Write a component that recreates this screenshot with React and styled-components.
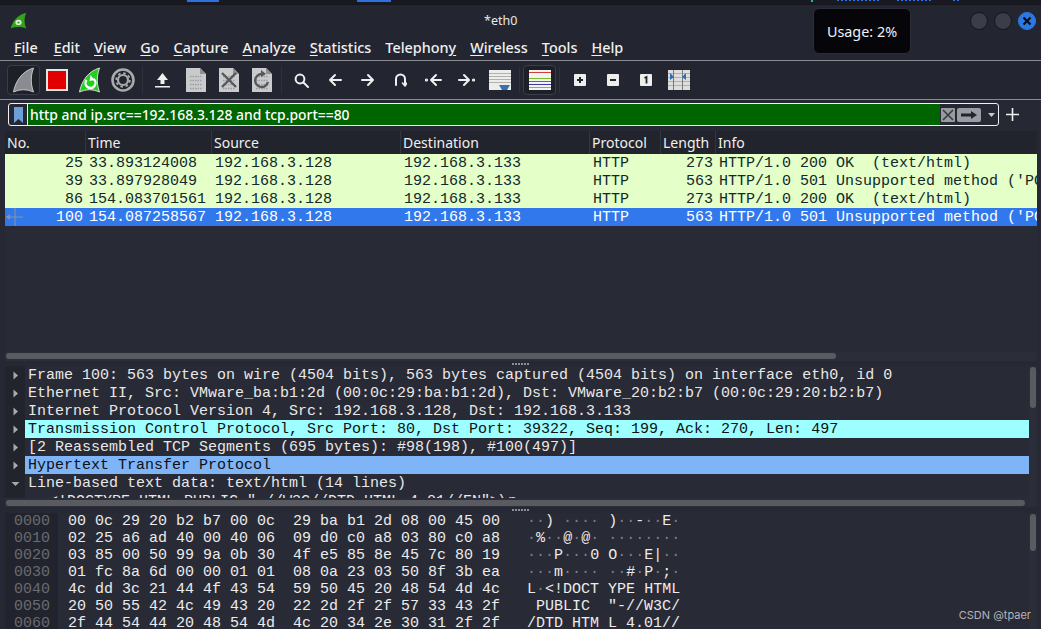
import React from 'react'
import styled, { createGlobalStyle } from 'styled-components'

const uiFont = `'Noto Sans', 'Open Sans', sans-serif`
const monoFont = `'Liberation Mono', monospace`
const packetCols = '80px 126px 189px 189px 71px 55px 1fr'

const GlobalStyle = createGlobalStyle`
  html, body {
    margin: 0;
    background: #fff;
    overflow: hidden;
  }
`

const Window = styled.div`
  position: relative;
  display: flex;
  flex-direction: column;
  width: 1041px;
  height: 629px;
  overflow: hidden;
  background: #262933;
  color: #e8e8e8;
  font-family: ${uiFont};
`

const TopStrip = styled.div`
  display: flex;
  height: 5px;
  background: #191a21;
  border-bottom: 1px solid #15161b;
  box-sizing: border-box;
`

const TopMark = styled.div`
  height: ${p => (p.$faint ? 1 : 2)}px;
  margin-left: ${p => p.$gap}px;
  width: ${p => p.$w}px;
  background: ${p =>
    p.$faint ? 'repeating-linear-gradient(90deg, #2f6fe0 0 2px, transparent 2px 4px)' : p.$color || '#2f6fe0'};
`

const TitleBar = styled.div`
  display: flex;
  align-items: flex-start;
  height: 33px;
  box-sizing: border-box;
  padding: 7px 5px 0 10px;
  background: #232630;
`

const TitleText = styled.div`
  flex: 1;
  padding: 0 0 0 457px;
  font-size: 12.5px;
  line-height: 17px;
`

const WinButtons = styled.div`
  display: flex;
  gap: 6px;
`

const WinButton = styled.div`
  display: flex;
  align-items: center;
  justify-content: center;
  width: 18px;
  height: 18px;
  box-sizing: border-box;
  border-radius: 50%;
  background: ${p => (p.$close ? '#2b78e4' : '#3b3e4a')};
  border: 1px solid ${p => (p.$close ? '#2b78e4' : '#14151a')};
`

const UsageTip = styled.div`
  position: absolute;
  left: 813px;
  top: 8px;
  width: 98px;
  height: 46px;
  box-sizing: border-box;
  display: flex;
  align-items: center;
  justify-content: center;
  background: #05050a;
  border: 1px solid #2b2d36;
  border-radius: 6px;
  font-size: 14.4px;
  color: #eef2f8;
`

const MenuBar = styled.div`
  display: flex;
  gap: 14px;
  height: 23px;
  box-sizing: border-box;
  padding-left: 14px;
  background: #232630;
  border-bottom: 1px solid #8a8b90;
  font-size: 14.4px;
  font-weight: 500;
  line-height: 20px;
  color: #f0f0f0;
`

const MenuItem = styled.span`
  &:first-child {
    margin-right: 2px;
  }

  u {
    text-underline-offset: 2px;
  }
`

const Toolbar = styled.div`
  display: flex;
  align-items: center;
  height: 39px;
  box-sizing: border-box;
  padding-left: 7px;
  background: #232630;
  border-bottom: 1px solid #8a8b90;
`

const ToolButton = styled.div`
  display: flex;
  align-items: center;
  justify-content: center;
  width: 33px;
  height: 30px;
  flex: none;
  box-sizing: border-box;
  border-radius: 4px;
  border: 1px solid ${p => (p.$active ? '#3a3d49' : 'transparent')};
  background: ${p => (p.$active ? '#1e2028' : 'transparent')};
`

const ToolSep = styled.div`
  width: 1px;
  height: 26px;
  margin: 0 3px 0 3px;
  background: #2f323c;
  flex: none;
`

const FilterRow = styled.div`
  display: flex;
  align-items: center;
  height: 31px;
  box-sizing: border-box;
  padding: 3px 0 5px 8px;
  background: #262933;
`

const FilterBox = styled.div`
  display: flex;
  align-items: stretch;
  width: 991px;
  height: 23px;
  box-sizing: border-box;
  border: 1px solid #f0f0f0;
  border-radius: 3px;
  background: #262933;
`

const BookmarkCell = styled.div`
  display: flex;
  align-items: center;
  justify-content: center;
  width: 18px;
  border-right: 1px solid #f0f0f0;
`

const FilterText = styled.div`
  flex: 1;
  padding-left: 2px;
  background: #006400;
  font-size: 13.9px;
  font-weight: 500;
  line-height: 22px;
  color: #fff;
`

const FilterActions = styled.div`
  display: flex;
  align-items: center;
  gap: 2px;
  padding: 0 2px 0 1px;
`

const AddFilter = styled.div`
  margin-left: 6px;
  width: 14px;
  height: 14px;
  display: flex;
  align-items: center;
  justify-content: center;
`

const Pane = styled.div`
  margin: 0 4px 0 5px;
  height: ${p => p.$h}px;
  flex: none;
  overflow: hidden;
  position: relative;
`

const HeaderRow = styled.div`
  display: grid;
  grid-template-columns: ${packetCols};
  height: 23px;
  background: #22242d;
  font-size: 14px;
  line-height: 24px;
  color: #f0f0f0;
`

const HeaderCell = styled.div`
  padding-left: 2px;
  border-left: ${p => (p.$first ? 'none' : '1px solid #33353f')};
  box-sizing: border-box;
`

const PacketRow = styled.div`
  position: relative;
  display: grid;
  grid-template-columns: ${packetCols};
  grid-auto-rows: 18px;
  height: 18px;
  background: ${p => (p.$selected ? '#3178ec' : '#e4ffc7')};
  color: ${p => (p.$selected ? '#fff' : '#12272e')};
  font-family: ${monoFont};
  font-size: 15px;
  line-height: 20px;
  white-space: pre;
`

const Cell = styled.div`
  overflow: hidden;
  padding-left: ${p => (p.$right ? 0 : 4)}px;
  padding-right: ${p => (p.$right ? 2 : 0)}px;
  text-align: ${p => (p.$right ? 'right' : 'left')};
`

const RowMark = styled.svg`
  position: absolute;
  left: 0;
  top: 0;
`

const PacketGap = styled.div`
  height: 126px;
  background: #282a35;
`

const HTrack = styled.div`
  height: 9px;
  padding: ${p => p.$top ?? 1}px 1px 0;
  box-sizing: border-box;
  background: #2b2d38;
`

const HThumb = styled.div`
  width: ${p => p.$w}px;
  height: 6px;
  background: #5a5b60;
  border-radius: 4px;
`

const Splitter = styled.div`
  height: ${p => p.$h}px;
  flex: none;
  display: flex;
  align-items: center;
  justify-content: center;
  background: #262933;
`

const GripDots = styled.div`
  width: 17px;
  height: 2px;
  background: repeating-linear-gradient(90deg, #8d8e94 0 2px, transparent 2px 3px);
`

const Panes = styled.div`
  display: flex;
  height: ${p => p.$h}px;
  overflow: hidden;
  background: #282a35;
`

const Lines = styled.div`
  flex: 1;
  min-width: 0;
  overflow: hidden;
`

const VTrack = styled.div`
  width: 8px;
  flex: none;
  padding: 1px 1px 0 1px;
  box-sizing: border-box;
  background: #2b2d38;
`

const VThumb = styled.div`
  height: ${p => p.$h}px;
  width: 6px;
  background: #5a5b60;
  border-radius: 4px;
`

const TreeRow = styled.div`
  display: flex;
  height: 18px;
  font-family: ${monoFont};
  font-size: 15px;
  line-height: 20px;
  white-space: pre;
`

const TreeGutter = styled.div`
  width: 20px;
  flex: none;
  display: flex;
  align-items: center;
  justify-content: center;
  background: #22242d;
`

const TreeLabel = styled.div`
  flex: 1;
  padding-left: ${p => p.$indent || 3}px;
  background: ${p => p.$bg || 'transparent'};
  color: ${p => (p.$bg ? '#0e1014' : '#e8e8e8')};
`

const HexRow = styled.div`
  display: flex;
  height: 17px;
  font-family: ${monoFont};
  font-size: 15px;
  line-height: 18px;
  white-space: pre;
`

const HexOffset = styled.div`
  width: 53px;
  flex: none;
  padding-left: 9px;
  box-sizing: border-box;
  background: #22242d;
  color: #6a6b70;
`

const HexBytes = styled.div`
  padding-left: 10px;
  color: #ececec;
`

const HexAscii = styled.div`
  padding-left: 27px;
  color: #ececec;
`

const Dim = styled.span`
  color: #7c7e84;
`

const Watermark = styled.div`
  position: absolute;
  right: 10px;
  bottom: 7px;
  font-family: Inter, ${uiFont};
  font-size: 11px;
  line-height: 14px;
  color: #b4b5b8;
`

/* icons */

const fin = 'M1 25C3 14 10 4 21 1C18 9 18 17 21 25C14 22 8 22 1 25Z'

const Logo = () => (
  <svg width="17" height="17" viewBox="0 0 22 26" preserveAspectRatio="none" style={{ flex: 'none' }}>
    <path d={fin} fill="#35a11d" />
    <circle cx="11" cy="16" r="4" fill="#dff3d5" />
    <circle cx="11" cy="16" r="1.6" fill="#35a11d" />
  </svg>
)

const FinGray = () => (
  <svg width="23" height="26" viewBox="0 0 22 26">
    <path d={fin} fill="#8a8c92" stroke="#c4c5c8" strokeWidth="1" />
  </svg>
)

const StopIcon = () => (
  <svg width="22" height="22" viewBox="0 0 22 22">
    <rect width="22" height="22" fill="#e6e6e2" />
    <rect x="2" y="2" width="18" height="18" fill="#e00000" />
  </svg>
)

const FinRestart = () => (
  <svg width="23" height="26" viewBox="0 0 22 26">
    <path d={fin} fill="#1fd01f" stroke="#d8dcd4" strokeWidth="1" />
    <path d="M8 13A5 5 0 1 0 15 12" fill="none" stroke="#fff" strokeWidth="2.4" />
    <path d="M12 8L16 13L11 14Z" fill="#fff" />
  </svg>
)

const GearIcon = () => (
  <svg width="24" height="24" viewBox="0 0 24 24" fill="none" stroke="#a9aaac">
    <circle cx="12" cy="12" r="10.5" strokeWidth="2.6" />
    <circle cx="12" cy="12" r="5" strokeWidth="2.2" />
    <circle cx="12" cy="12" r="6.8" strokeWidth="1.8" strokeDasharray="2.6 2.74" />
  </svg>
)

const UploadIcon = () => (
  <svg width="15" height="16" viewBox="0 0 15 16">
    <path d="M7.5 1L13 8H9.5V12H5.5V8H2Z" fill="#efefef" />
    <rect y="14" width="15" height="1.5" fill="#efefef" />
  </svg>
)

const FileBase = ({ children }) => (
  <svg width="20" height="24" viewBox="0 0 20 24">
    <path d="M0 0H14L20 6V24H0Z" fill="#c9cacb" />
    <path d="M14 0L20 6H14Z" fill="#8e9094" />
    <g stroke="#9a9c9f" strokeWidth="1.4" strokeDasharray="1.5 1">
      <path d="M4 8.500H16M4 12.500H16M4 16.500H16M4 20.500H16" />
    </g>
    {children}
  </svg>
)

const FileCloseIcon = () => (
  <FileBase>
    <path d="M3 5L17 19M17 5L3 19" stroke="#55575c" strokeWidth="2.4" />
  </FileBase>
)

const FileReloadIcon = () => (
  <FileBase>
    <path d="M10 6A6.5 6.5 0 1 0 16 14" fill="none" stroke="#55575c" strokeWidth="2.4" />
    <path d="M9 2L14 6L9 9Z" fill="#55575c" />
  </FileBase>
)

const Stroke = ({ w = 16, h = 14, children }) => (
  <svg
    width={w}
    height={h}
    viewBox={`0 0 ${w} ${h}`}
    fill="none"
    stroke="#f0f0f0"
    strokeWidth="2"
    strokeLinecap="round"
    strokeLinejoin="round"
  >
    {children}
  </svg>
)

const SearchIcon = () => (
  <Stroke w={15} h={15}>
    <circle cx="6" cy="6" r="4.4" />
    <path d="M9.5 9.5L14 14" />
  </Stroke>
)

const ArrowLeft = () => (
  <Stroke w={14} h={14}>
    <path d="M13 7H2M7 2L2 7L7 12" />
  </Stroke>
)

const ArrowRight = () => (
  <Stroke w={14} h={14}>
    <path d="M1 7H12M7 2L12 7L7 12" />
  </Stroke>
)

const JumpIcon = () => (
  <Stroke w={13} h={15}>
    <path d="M2 12V6A4.5 4.5 0 0 1 11 6V11" />
    <path d="M8.5 10L11 13L13 10" strokeWidth="1.6" />
  </Stroke>
)

const PrevIcon = () => (
  <Stroke w={17} h={14}>
    <circle cx="1.500" cy="7" r="0.6" fill="#f0f0f0" />
    <path d="M16 7H7M11 2L6 7L11 12" />
  </Stroke>
)

const NextIcon = () => (
  <Stroke w={17} h={14}>
    <circle cx="15.500" cy="7" r="0.6" fill="#f0f0f0" />
    <path d="M1 7H10M6 2L11 7L6 12" />
  </Stroke>
)

const AutoScrollIcon = () => (
  <svg width="22" height="20" viewBox="0 0 22 20">
    <rect width="22" height="20" fill="#ececea" />
    <g fill="#b0b1ad">
      <rect y="3" width="22" height="1" />
      <rect y="6" width="22" height="1" />
      <rect y="9" width="22" height="1" />
      <rect y="12" width="22" height="1" />
    </g>
    <path d="M10 15H21L18 20H13Z" fill="#3a6fb0" />
  </svg>
)

const ColorizeIcon = () => (
  <svg width="22" height="20" viewBox="0 0 22 20">
    <rect width="22" height="20" fill="#f2f2f0" />
    <rect y="2" width="22" height="1" fill="#d43c3c" />
    <rect y="8" width="22" height="1" fill="#7cbb30" />
    <rect y="11" width="22" height="1" fill="#3b6fc4" />
    <rect y="14" width="22" height="1" fill="#3a3a9c" />
    <rect y="17" width="22" height="1" fill="#d29a10" />
  </svg>
)

const ZoomBox = ({ children }) => (
  <svg width="12" height="12" viewBox="0 0 12 12">
    <rect width="12" height="12" rx="1" fill="#eeeeec" />
    {children}
  </svg>
)

const ResizeIcon = () => (
  <svg width="22" height="20" viewBox="0 0 22 20">
    <rect width="22" height="20" fill="#dededc" />
    <g fill="#b0b1ad">
      <rect y="3" width="22" height="1" />
      <rect y="7" width="22" height="1" />
      <rect y="11" width="22" height="1" />
      <rect y="15" width="22" height="1" />
    </g>
    <rect x="5" width="1" height="20" fill="#76787a" />
    <rect x="14" width="1" height="20" fill="#76787a" />
    <path d="M2 3L6 7L2 10Z M18 3L14 7L18 10Z" fill="#2f6cb4" />
  </svg>
)

const Triangle = ({ open }) => (
  <svg width="9" height="9" viewBox="0 0 9 9">
    {open ? <path d="M0.5 3H8.500L4.500 7Z" fill="#a8a9ad" /> : <path d="M2.500 0.500V8.500L7 4.500Z" fill="#a8a9ad" />}
  </svg>
)

const tools = [
  { key: 'start', icon: <FinGray />, active: true },
  { key: 'stop', icon: <StopIcon /> },
  { key: 'restart', icon: <FinRestart /> },
  { key: 'options', icon: <GearIcon /> },
  { sep: true, key: 's1' },
  { key: 'open', icon: <UploadIcon /> },
  { key: 'save', icon: <FileBase /> },
  { key: 'close', icon: <FileCloseIcon /> },
  { key: 'reload', icon: <FileReloadIcon /> },
  { sep: true, key: 's2' },
  { key: 'find', icon: <SearchIcon /> },
  { key: 'back', icon: <ArrowLeft /> },
  { key: 'forward', icon: <ArrowRight /> },
  { key: 'goto', icon: <JumpIcon /> },
  { key: 'first', icon: <PrevIcon /> },
  { key: 'last', icon: <NextIcon /> },
  { key: 'auto', icon: <AutoScrollIcon /> },
  { sep: true, key: 's3' },
  { key: 'color', icon: <ColorizeIcon />, active: true },
  { sep: true, key: 's4' },
  { key: 'in', icon: <ZoomBox><path d="M3 6H9M6 3V9" stroke="#23262f" strokeWidth="2" /></ZoomBox> },
  { key: 'out', icon: <ZoomBox><path d="M3 6H9" stroke="#23262f" strokeWidth="2" /></ZoomBox> },
  { key: 'normal', icon: <ZoomBox><path d="M4.500 4L6.500 3V9.500" fill="none" stroke="#23262f" strokeWidth="1.8" /></ZoomBox> },
  { key: 'resize', icon: <ResizeIcon /> },
]

const menus = [
  ['', 'F', 'ile'],
  ['', 'E', 'dit'],
  ['', 'V', 'iew'],
  ['', 'G', 'o'],
  ['', 'C', 'apture'],
  ['', 'A', 'nalyze'],
  ['', 'S', 'tatistics'],
  ['Telephon', 'y', ''],
  ['', 'W', 'ireless'],
  ['', 'T', 'ools'],
  ['', 'H', 'elp'],
]

const columns = ['No.', 'Time', 'Source', 'Destination', 'Protocol', 'Length', 'Info']

const packets = [
  ['25', '33.893124008', '273', 'HTTP/1.0 200 OK  (text/html)'],
  ['39', '33.897928049', '563', "HTTP/1.0 501 Unsupported method ('POST')"],
  ['86', '154.083701561', '273', 'HTTP/1.0 200 OK  (text/html)'],
  ['100', '154.087258567', '563', "HTTP/1.0 501 Unsupported method ('POST')"],
]

const tree = [
  { text: 'Frame 100: 563 bytes on wire (4504 bits), 563 bytes captured (4504 bits) on interface eth0, id 0' },
  { text: 'Ethernet II, Src: VMware_ba:b1:2d (00:0c:29:ba:b1:2d), Dst: VMware_20:b2:b7 (00:0c:29:20:b2:b7)' },
  { text: 'Internet Protocol Version 4, Src: 192.168.3.128, Dst: 192.168.3.133' },
  { text: 'Transmission Control Protocol, Src Port: 80, Dst Port: 39322, Seq: 199, Ack: 270, Len: 497', bg: '#9dffff' },
  { text: '[2 Reassembled TCP Segments (695 bytes): #98(198), #100(497)]' },
  { text: 'Hypertext Transfer Protocol', bg: '#7fb4f6' },
  { text: 'Line-based text data: text/html (14 lines)', open: true },
]

const hex = [
  ['0000', '00 0c 29 20 b2 b7 00 0c  29 ba b1 2d 08 00 45 00', '··) ···· )··-··E·'],
  ['0010', '02 25 a6 ad 40 00 40 06  09 d0 c0 a8 03 80 c0 a8', '·%··@·@· ········'],
  ['0020', '03 85 00 50 99 9a 0b 30  4f e5 85 8e 45 7c 80 19', '···P···0 O···E|··'],
  ['0030', '01 fc 8a 6d 00 00 01 01  08 0a 23 03 50 8f 3b ea', '···m···· ··#·P·;·'],
  ['0040', '4c dd 3c 21 44 4f 43 54  59 50 45 20 48 54 4d 4c', 'L·<!DOCT YPE HTML'],
  ['0050', '20 50 55 42 4c 49 43 20  22 2d 2f 2f 57 33 43 2f', ' PUBLIC  "-//W3C/'],
  ['0060', '2f 44 54 44 20 48 54 4d  4c 20 34 2e 30 31 2f 2f', '/DTD HTM L 4.01//'],
]

const dimDots = text =>
  text.split(/(·+)/).map((part, i) => (part.startsWith('·') ? <Dim key={i}>{part}</Dim> : part))

export default function App() {
  return (
    <Window>
      <GlobalStyle />
      <TopStrip>
        <TopMark $gap={187} $w={32} />
        <TopMark $gap={138} $w={34} />
        <TopMark $gap={420} $w={2} $color="#18b8a8" />
        <TopMark $gap={24} $w={44} $faint />
        <TopMark $gap={16} $w={36} $faint />
        <TopMark $gap={20} $w={8} $faint />
      </TopStrip>
      <TitleBar>
        <Logo />
        <TitleText>*eth0</TitleText>
        <WinButtons>
          <WinButton />
          <WinButton />
          <WinButton $close>
            <svg width="10" height="10" viewBox="0 0 10 10">
              <path d="M1.500 1.500L8.500 8.500M8.500 1.500L1.500 8.500" stroke="#0b0d14" strokeWidth="2.2" />
            </svg>
          </WinButton>
        </WinButtons>
      </TitleBar>
      <UsageTip>Usage: 2%</UsageTip>
      <MenuBar>
        {menus.map(([before, key, after]) => (
          <MenuItem key={before + key + after}>
            {before}
            <u>{key}</u>
            {after}
          </MenuItem>
        ))}
      </MenuBar>
      <Toolbar>
        {tools.map(t =>
          t.sep ? (
            <ToolSep key={t.key} />
          ) : (
            <ToolButton key={t.key} $active={t.active}>
              {t.icon}
            </ToolButton>
          ),
        )}
      </Toolbar>
      <FilterRow>
        <FilterBox>
          <BookmarkCell>
            <svg width="9" height="16" viewBox="0 0 9 16">
              <path d="M0 0H9V16L4.500 12L0 16Z" fill="#6d9fd8" />
            </svg>
          </BookmarkCell>
          <FilterText>http and ip.src==192.168.3.128 and tcp.port==80</FilterText>
          <FilterActions>
            <svg width="14" height="14" viewBox="0 0 14 14">
              <rect width="14" height="14" rx="1" fill="#9a9b9f" />
              <path d="M2 2L12 12M12 2L2 12" stroke="#3a3c44" strokeWidth="1.6" />
            </svg>
            <svg width="24" height="14" viewBox="0 0 24 14">
              <rect width="24" height="14" rx="2" fill="#9a9ba3" />
              <path d="M4 5.500H14V3L20 7L14 11V8.500H4Z" fill="#23252e" />
            </svg>
            <svg width="13" height="14" viewBox="0 0 13 14">
              <path d="M5 5H12L8.500 9Z" fill="#c8c8c8" />
            </svg>
          </FilterActions>
        </FilterBox>
        <AddFilter>
          <svg width="13" height="13" viewBox="0 0 13 13">
            <path d="M6.500 0V13M0 6.500H13" stroke="#f0f0f0" strokeWidth="1.6" />
          </svg>
        </AddFilter>
      </FilterRow>

      <Pane $h={230}>
        <HeaderRow>
          {columns.map((c, i) => (
            <HeaderCell key={c} $first={i === 0}>
              {c}
            </HeaderCell>
          ))}
        </HeaderRow>
        {packets.map(([no, time, len, info], i) => (
          <PacketRow key={no} $selected={i === 3}>
            <Cell $right>{no}</Cell>
            <Cell>{time}</Cell>
            <Cell>192.168.3.128</Cell>
            <Cell>192.168.3.133</Cell>
            <Cell>HTTP</Cell>
            <Cell $right>{len}</Cell>
            <Cell>{info}</Cell>
            {i === 3 && (
              <RowMark width="20" height="18" viewBox="0 0 20 18">
                <path d="M1 9H18M10 0V18" stroke="#8a93a0" strokeWidth="1" />
                <path d="M1 9L5 6V12Z" fill="#8a93a0" />
              </RowMark>
            )}
          </PacketRow>
        ))}
        <PacketGap />
        <HTrack>
          <HThumb $w={830} />
        </HTrack>
      </Pane>
      <Splitter $h={5}>
        <GripDots />
      </Splitter>

      <Pane $h={141}>
        <Panes $h={132}>
          <Lines>
            {tree.map(row => (
              <TreeRow key={row.text}>
                <TreeGutter>
                  <Triangle open={row.open} />
                </TreeGutter>
                <TreeLabel $bg={row.bg}>{row.text}</TreeLabel>
              </TreeRow>
            ))}
            <TreeRow>
              <TreeGutter />
              <TreeLabel $indent={24}>{'<!DOCTYPE HTML PUBLIC "-//W3C//DTD HTML 4.01//EN">\\n'}</TreeLabel>
            </TreeRow>
          </Lines>
          <VTrack>
            <VThumb $h={41} />
          </VTrack>
        </Panes>
        <HTrack $top={2}>
          <HThumb $w={1019} />
        </HTrack>
      </Pane>
      <Splitter $h={6}>
        <GripDots />
      </Splitter>

      <Pane $h={116}>
        <Panes $h={116}>
          <Lines>
            {hex.map(([offset, bytes, ascii]) => (
              <HexRow key={offset}>
                <HexOffset>{offset}</HexOffset>
                <HexBytes>{bytes}</HexBytes>
                <HexAscii>{dimDots(ascii)}</HexAscii>
              </HexRow>
            ))}
          </Lines>
          <VTrack>
            <VThumb $h={37} />
          </VTrack>
        </Panes>
      </Pane>
      <Watermark>CSDN @tpaer</Watermark>
    </Window>
  )
}
